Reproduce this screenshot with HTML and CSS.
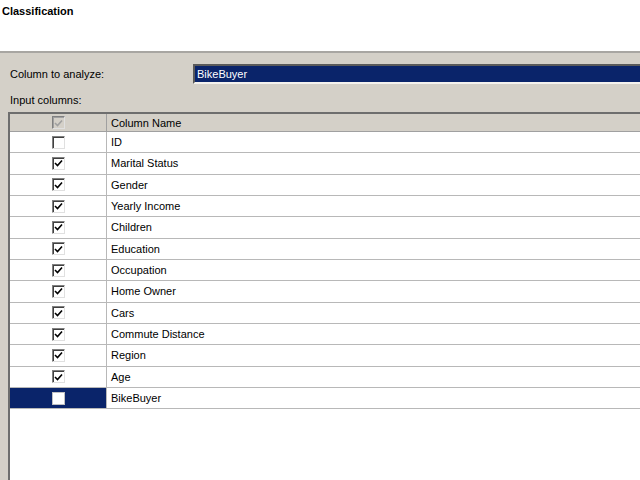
FILE: index.html
```html
<!DOCTYPE html>
<html>
<head>
<meta charset="utf-8">
<link rel="stylesheet" href="styles.css">
</head>
<body>
<div class="title">Classification</div>
<div class="panel">
  <div class="field-row">
    <span class="label">Column to analyze:</span>
    <div class="combo"><span class="combo-text">BikeBuyer</span></div>
  </div>
  <div class="label input-label">Input columns:</div>
  <div class="grid">
    <div class="row header">
      <div class="cell check"><span class="box disabled"><svg viewBox="0 0 9 9" width="9" height="9"><path d="M1 4 L3.5 6.5 L8 1.5" fill="none" stroke="#a0a0a0" stroke-width="1.6"/></svg></span></div>
      <div class="cell name">Column Name</div>
    </div>
    <div class="row"><div class="cell check"><span class="box"></span></div><div class="cell name">ID</div></div>
    <div class="row"><div class="cell check"><span class="box on"><svg viewBox="0 0 9 9" width="9" height="9"><path d="M1 4 L3.5 6.5 L8 1.5" fill="none" stroke="#000" stroke-width="1.6"/></svg></span></div><div class="cell name">Marital Status</div></div>
    <div class="row"><div class="cell check"><span class="box on"><svg viewBox="0 0 9 9" width="9" height="9"><path d="M1 4 L3.5 6.5 L8 1.5" fill="none" stroke="#000" stroke-width="1.6"/></svg></span></div><div class="cell name">Gender</div></div>
    <div class="row"><div class="cell check"><span class="box on"><svg viewBox="0 0 9 9" width="9" height="9"><path d="M1 4 L3.5 6.5 L8 1.5" fill="none" stroke="#000" stroke-width="1.6"/></svg></span></div><div class="cell name">Yearly Income</div></div>
    <div class="row"><div class="cell check"><span class="box on"><svg viewBox="0 0 9 9" width="9" height="9"><path d="M1 4 L3.5 6.5 L8 1.5" fill="none" stroke="#000" stroke-width="1.6"/></svg></span></div><div class="cell name">Children</div></div>
    <div class="row"><div class="cell check"><span class="box on"><svg viewBox="0 0 9 9" width="9" height="9"><path d="M1 4 L3.5 6.5 L8 1.5" fill="none" stroke="#000" stroke-width="1.6"/></svg></span></div><div class="cell name">Education</div></div>
    <div class="row"><div class="cell check"><span class="box on"><svg viewBox="0 0 9 9" width="9" height="9"><path d="M1 4 L3.5 6.5 L8 1.5" fill="none" stroke="#000" stroke-width="1.6"/></svg></span></div><div class="cell name">Occupation</div></div>
    <div class="row"><div class="cell check"><span class="box on"><svg viewBox="0 0 9 9" width="9" height="9"><path d="M1 4 L3.5 6.5 L8 1.5" fill="none" stroke="#000" stroke-width="1.6"/></svg></span></div><div class="cell name">Home Owner</div></div>
    <div class="row"><div class="cell check"><span class="box on"><svg viewBox="0 0 9 9" width="9" height="9"><path d="M1 4 L3.5 6.5 L8 1.5" fill="none" stroke="#000" stroke-width="1.6"/></svg></span></div><div class="cell name">Cars</div></div>
    <div class="row"><div class="cell check"><span class="box on"><svg viewBox="0 0 9 9" width="9" height="9"><path d="M1 4 L3.5 6.5 L8 1.5" fill="none" stroke="#000" stroke-width="1.6"/></svg></span></div><div class="cell name">Commute Distance</div></div>
    <div class="row"><div class="cell check"><span class="box on"><svg viewBox="0 0 9 9" width="9" height="9"><path d="M1 4 L3.5 6.5 L8 1.5" fill="none" stroke="#000" stroke-width="1.6"/></svg></span></div><div class="cell name">Region</div></div>
    <div class="row"><div class="cell check"><span class="box on"><svg viewBox="0 0 9 9" width="9" height="9"><path d="M1 4 L3.5 6.5 L8 1.5" fill="none" stroke="#000" stroke-width="1.6"/></svg></span></div><div class="cell name">Age</div></div>
    <div class="row selected"><div class="cell check"><span class="box"></span></div><div class="cell name">BikeBuyer</div></div>
  </div>
</div>
</body>
</html>
```
FILE: styles.css
```css
html, body {
  margin: 0;
  padding: 0;
  width: 640px;
  height: 480px;
  overflow: hidden;
  background: #ffffff;
  font-family: "Liberation Sans", Arial, sans-serif;
  font-size: 11px;
  color: #000;
}
.title {
  height: 53px;
  box-sizing: border-box;
  padding: 5px 0 0 2px;
  font-weight: bold;
  font-size: 11px;
  border-bottom: 2px solid #a8a6a2;
}
.panel {
  background: #d4d0c8;
  height: 427px;
  display: flex;
  flex-direction: column;
}
.field-row {
  display: flex;
  align-items: center;
  margin-top: 11px;
  height: 20px;
}
.label {
  color: #000;
}
.field-row .label {
  padding-left: 10px;
  width: 183px;
}
.combo {
  flex: 1;
  height: 20px;
  box-sizing: border-box;
  border-top: 2px solid #5a5a5a;
  border-left: 2px solid #5a5a5a;
  border-bottom: 2px solid #f4f2ee;
  background: #0a246a;
  display: flex;
  align-items: center;
}
.combo-text {
  color: #fff;
  padding-left: 2px;
}
.input-label {
  padding-left: 10px;
  margin-top: 10px;
  height: 14px;
}
.grid {
  margin-top: 4px;
  margin-left: 8px;
  flex: 1;
  background: #fff;
  border-top: 2px solid #6e6e6e;
  border-left: 2px solid #6e6e6e;
  display: flex;
  flex-direction: column;
}
.row {
  display: flex;
  height: 21.33px;
  box-sizing: border-box;
  border-bottom: 1px solid #b8b8b8;
}
.row.header {
  height: 18px;
  background: #d4d0c8;
  border-bottom: 1px solid #a0a0a0;
}
.cell {
  display: flex;
  align-items: center;
  box-sizing: border-box;
}
.cell.check {
  width: 97px;
  justify-content: center;
  border-right: 1px solid #b8b8b8;
}
.header .cell.check {
  border-right: 1px solid #a0a0a0;
}
.cell.name {
  flex: 1;
  padding-left: 4px;
}
.box {
  width: 13px;
  height: 13px;
  box-sizing: border-box;
  border-top: 1px solid #808080;
  border-left: 1px solid #808080;
  border-right: 1px solid #e0e0e0;
  border-bottom: 1px solid #e0e0e0;
  box-shadow: inset 1px 1px 0 #404040;
  background: #fff;
  display: flex;
  align-items: center;
  justify-content: center;
}
.box.disabled {
  background: #d4d0c8;
  box-shadow: inset 1px 1px 0 #a0a0a0;
}
.box svg {
  display: block;
  margin: 1px 0 0 1px;
}
.selected .cell.check {
  background: #0a246a;
}
.selected .box {
  border: 1px solid #c0c0c0;
  box-shadow: none;
}
```
